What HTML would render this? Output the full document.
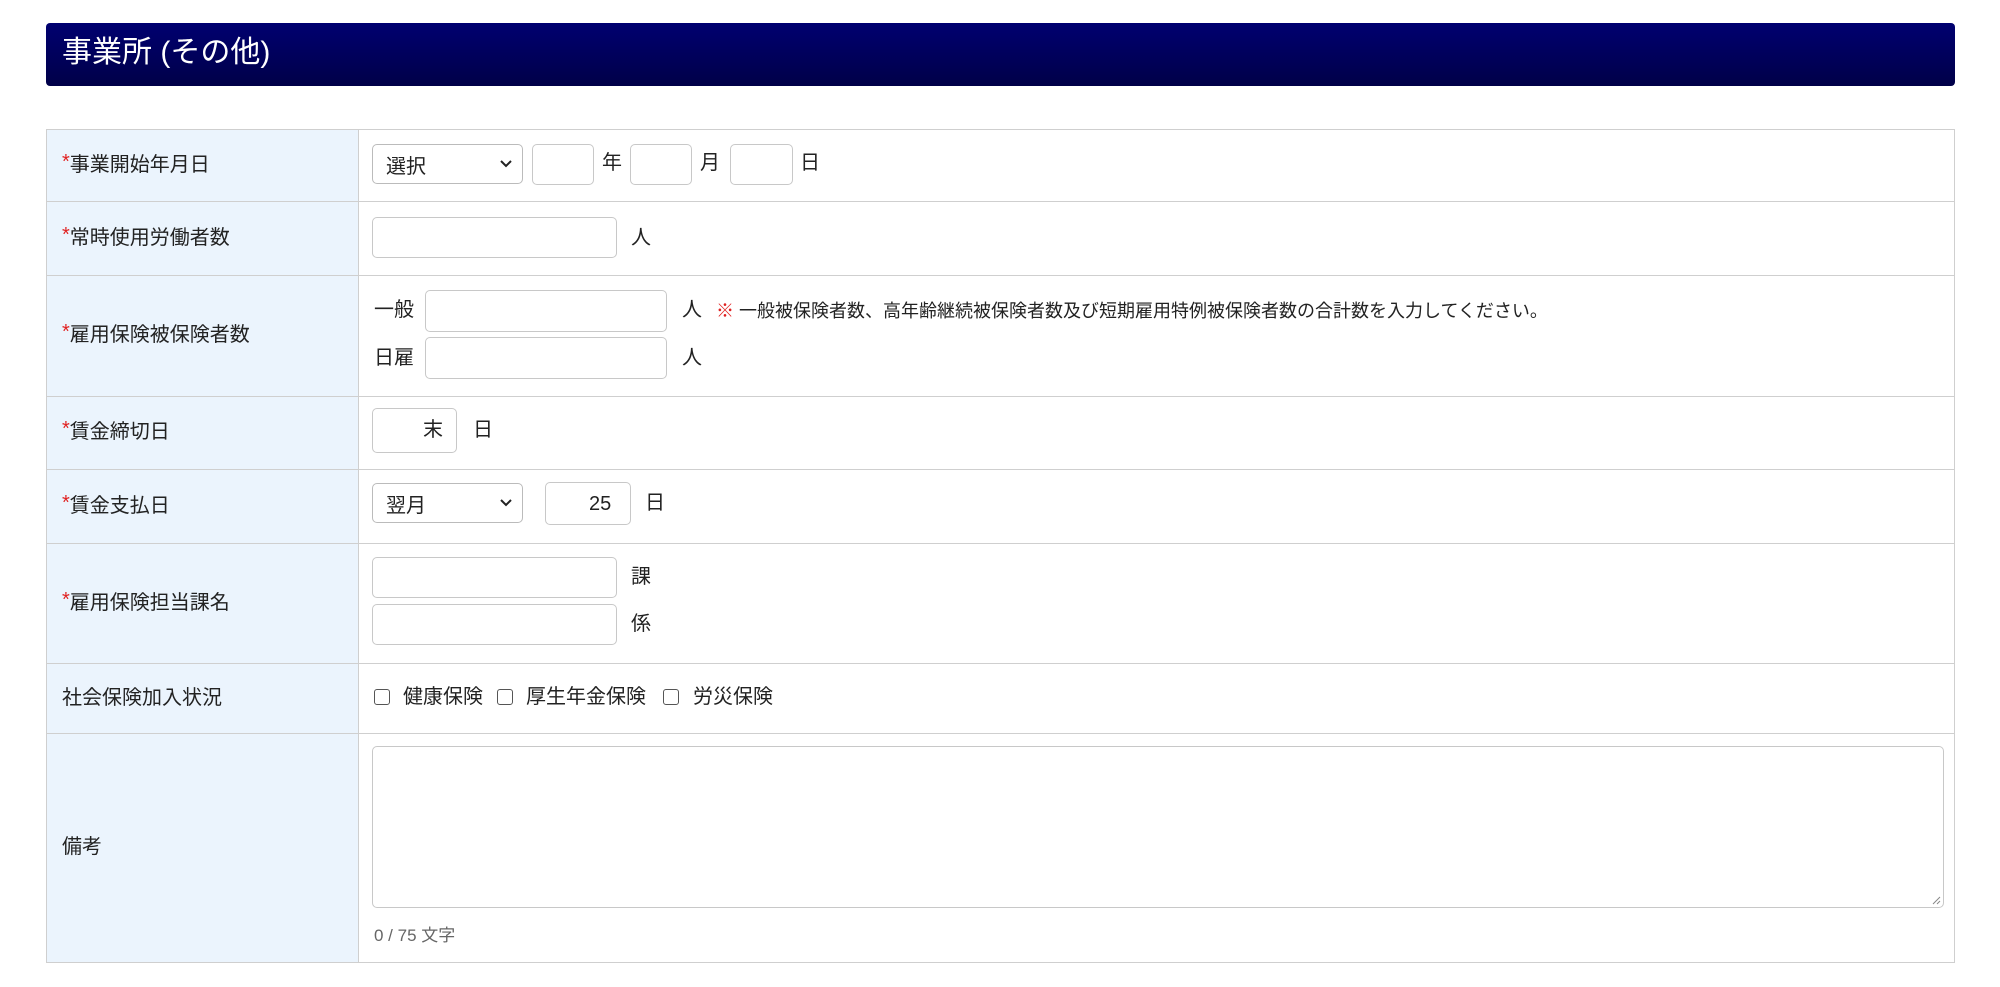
<!DOCTYPE html>
<html><head><meta charset="utf-8"><style>
*{box-sizing:border-box;margin:0;padding:0}
body{width:2000px;height:987px;background:#fff;font-family:"Liberation Sans","Noto Sans CJK JP",sans-serif;color:#222;position:relative;overflow:hidden;font-size:20px}
.a{position:absolute;white-space:nowrap}
.hdr{left:46px;top:23px;width:1909px;height:63px;border-radius:4px;background:linear-gradient(#000070,#000048);color:#fff;font-size:30px;line-height:60px;padding-left:16px}
.lab{position:absolute;left:46px;width:312px;background:#ebf4fd;border:1px solid #cfcfcf;border-right:none;font-size:20px;padding-left:15px;padding-bottom:7px;display:flex;align-items:center}
.val{position:absolute;left:358px;width:1597px;border:1px solid #cfcfcf}
.req{color:#e02020}
.in{position:absolute;border:1px solid #c8c8c8;border-radius:5px;background:#fff}
.sel{position:absolute;border:1px solid #bbb;border-radius:5px;background:#fff;font-size:20px;padding-left:13px;display:flex;align-items:center}
.sel svg{position:absolute;right:10px;top:50%;margin-top:-4px}
.t{position:absolute;font-size:20px;line-height:24px;white-space:nowrap}
.cb{position:absolute;width:16px;height:16px;border:1.5px solid #555;border-radius:3px;background:#fff}
</style></head><body>
<div class="a hdr">事業所 (その他)</div>

<div class="lab" style="top:129px;height:73px"><span class="req">*</span>事業開始年月日</div>
<div class="val" style="top:129px;height:73px"></div>
<div class="lab" style="top:201px;height:75px"><span class="req">*</span>常時使用労働者数</div>
<div class="val" style="top:201px;height:75px"></div>
<div class="lab" style="top:275px;height:122px"><span class="req">*</span>雇用保険被保険者数</div>
<div class="val" style="top:275px;height:122px"></div>
<div class="lab" style="top:396px;height:74px"><span class="req">*</span>賃金締切日</div>
<div class="val" style="top:396px;height:74px"></div>
<div class="lab" style="top:469px;height:75px"><span class="req">*</span>賃金支払日</div>
<div class="val" style="top:469px;height:75px"></div>
<div class="lab" style="top:543px;height:121px"><span class="req">*</span>雇用保険担当課名</div>
<div class="val" style="top:543px;height:121px"></div>
<div class="lab" style="top:663px;height:71px">社会保険加入状況</div>
<div class="val" style="top:663px;height:71px"></div>
<div class="lab" style="top:733px;height:230px">備考</div>
<div class="val" style="top:733px;height:230px"></div>

<!-- row1 -->
<div class="sel" style="left:372px;top:144px;width:151px;height:40px">選択<svg width="12" height="8" viewBox="0 0 12 8"><path d="M1 1l5 5 5-5" fill="none" stroke="#222" stroke-width="2"/></svg></div>
<div class="in" style="left:532px;top:144px;width:62px;height:41px"></div>
<div class="t" style="left:602px;top:151px">年</div>
<div class="in" style="left:630px;top:144px;width:62px;height:41px"></div>
<div class="t" style="left:700px;top:151px">月</div>
<div class="in" style="left:730px;top:144px;width:63px;height:41px"></div>
<div class="t" style="left:800px;top:151px">日</div>
<!-- row2 -->
<div class="in" style="left:372px;top:217px;width:245px;height:41px"></div>
<div class="t" style="left:631px;top:226px">人</div>
<!-- row3 -->
<div class="t" style="left:374px;top:298px">一般</div>
<div class="in" style="left:425px;top:290px;width:242px;height:42px"></div>
<div class="t" style="left:682px;top:298px">人</div>
<div class="t" style="left:716px;top:299px;font-size:18px"><span style="color:#e02020;font-weight:bold">※</span> 一般被保険者数、高年齢継続被保険者数及び短期雇用特例被保険者数の合計数を入力してください。</div>
<div class="t" style="left:374px;top:346px">日雇</div>
<div class="in" style="left:425px;top:337px;width:242px;height:42px"></div>
<div class="t" style="left:682px;top:346px">人</div>
<!-- row4 -->
<div class="in" style="left:372px;top:408px;width:85px;height:45px"></div>
<div class="t" style="left:423px;top:418px">末</div>
<div class="t" style="left:473px;top:418px">日</div>
<!-- row5 -->
<div class="sel" style="left:372px;top:483px;width:151px;height:40px">翌月<svg width="12" height="8" viewBox="0 0 12 8"><path d="M1 1l5 5 5-5" fill="none" stroke="#222" stroke-width="2"/></svg></div>
<div class="in" style="left:545px;top:482px;width:86px;height:43px"></div>
<div class="t" style="left:589px;top:492px">25</div>
<div class="t" style="left:645px;top:491px">日</div>
<!-- row6 -->
<div class="in" style="left:372px;top:557px;width:245px;height:41px"></div>
<div class="t" style="left:631px;top:565px">課</div>
<div class="in" style="left:372px;top:604px;width:245px;height:41px"></div>
<div class="t" style="left:631px;top:612px">係</div>
<!-- row7 -->
<div class="cb" style="left:374px;top:689px"></div>
<div class="t" style="left:403px;top:685px">健康保険</div>
<div class="cb" style="left:497px;top:689px"></div>
<div class="t" style="left:526px;top:685px">厚生年金保険</div>
<div class="cb" style="left:663px;top:689px"></div>
<div class="t" style="left:693px;top:685px">労災保険</div>
<!-- row8 -->
<div class="in" style="left:372px;top:746px;width:1572px;height:162px"><svg style="position:absolute;right:2px;bottom:2px" width="10" height="10" viewBox="0 0 10 10"><path d="M9 2L2 9M9 6L6 9" stroke="#888" stroke-width="1"/></svg></div>
<div class="t" style="left:374px;top:924px;font-size:17px;color:#666">0 / 75 文字</div>
</body></html>
